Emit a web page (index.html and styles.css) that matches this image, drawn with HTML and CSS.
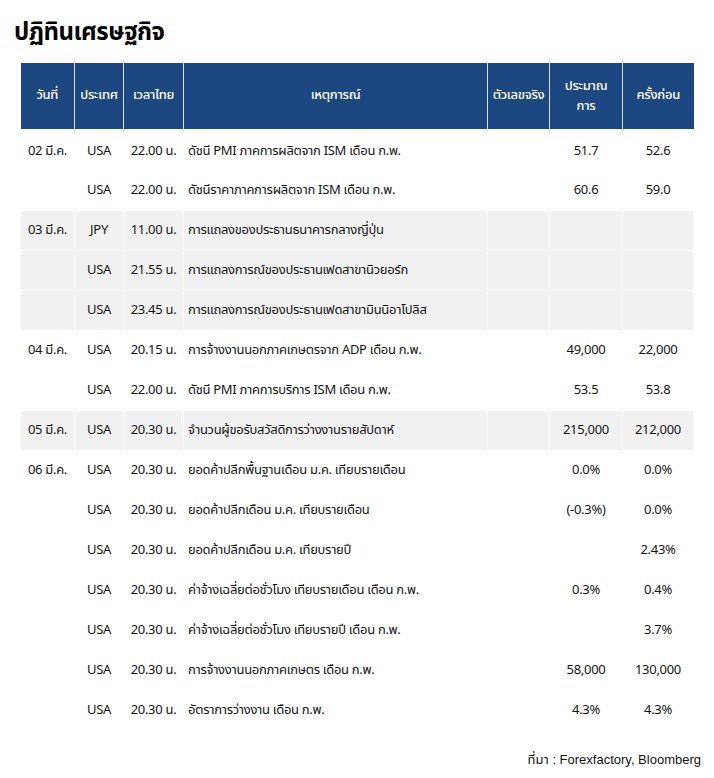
FILE: index.html
```html
<!DOCTYPE html>
<html lang="th">
<head>
<meta charset="utf-8">
<title>ปฏิทินเศรษฐกิจ</title>
<link rel="stylesheet" href="styles.css">
</head>
<body>
<div class="page">
  <h1 class="title">ปฏิทินเศรษฐกิจ</h1>
  <table class="cal">
    <colgroup>
      <col class="c-date"><col class="c-country"><col class="c-time"><col class="c-event"><col class="c-actual"><col class="c-fc"><col class="c-prev">
    </colgroup>
    <thead>
      <tr>
        <th>วันที่</th><th>ประเทศ</th><th>เวลาไทย</th><th>เหตุการณ์</th><th>ตัวเลขจริง</th><th><span class="hl">ประมาณ</span><span class="hl">การ</span></th><th>ครั้งก่อน</th>
      </tr>
    </thead>
    <tbody>
      <tr><td>02 มี.ค.</td><td>USA</td><td>22.00 น.</td><td class="ev">ดัชนี PMI ภาคการผลิตจาก ISM เดือน ก.พ.</td><td></td><td>51.7</td><td>52.6</td></tr>
      <tr><td></td><td>USA</td><td>22.00 น.</td><td class="ev">ดัชนีราคาภาคการผลิตจาก ISM เดือน ก.พ.</td><td></td><td>60.6</td><td>59.0</td></tr>
      <tr class="alt"><td>03 มี.ค.</td><td>JPY</td><td>11.00 น.</td><td class="ev">การแถลงของประธานธนาคารกลางญี่ปุ่น</td><td></td><td></td><td></td></tr>
      <tr class="alt"><td></td><td>USA</td><td>21.55 น.</td><td class="ev">การแถลงการณ์ของประธานเฟดสาขานิวยอร์ก</td><td></td><td></td><td></td></tr>
      <tr class="alt"><td></td><td>USA</td><td>23.45 น.</td><td class="ev">การแถลงการณ์ของประธานเฟดสาขามินนิอาโปลิส</td><td></td><td></td><td></td></tr>
      <tr><td>04 มี.ค.</td><td>USA</td><td>20.15 น.</td><td class="ev">การจ้างงานนอกภาคเกษตรจาก ADP เดือน ก.พ.</td><td></td><td>49,000</td><td>22,000</td></tr>
      <tr><td></td><td>USA</td><td>22.00 น.</td><td class="ev">ดัชนี PMI ภาคการบริการ ISM เดือน ก.พ.</td><td></td><td>53.5</td><td>53.8</td></tr>
      <tr class="alt"><td>05 มี.ค.</td><td>USA</td><td>20.30 น.</td><td class="ev">จำนวนผู้ขอรับสวัสดิการว่างงานรายสัปดาห์</td><td></td><td>215,000</td><td>212,000</td></tr>
      <tr><td>06 มี.ค.</td><td>USA</td><td>20.30 น.</td><td class="ev">ยอดค้าปลีกพื้นฐานเดือน ม.ค. เทียบรายเดือน</td><td></td><td>0.0%</td><td>0.0%</td></tr>
      <tr><td></td><td>USA</td><td>20.30 น.</td><td class="ev">ยอดค้าปลีกเดือน ม.ค. เทียบรายเดือน</td><td></td><td>(-0.3%)</td><td>0.0%</td></tr>
      <tr><td></td><td>USA</td><td>20.30 น.</td><td class="ev">ยอดค้าปลีกเดือน ม.ค. เทียบรายปี</td><td></td><td></td><td>2.43%</td></tr>
      <tr><td></td><td>USA</td><td>20.30 น.</td><td class="ev">ค่าจ้างเฉลี่ยต่อชั่วโมง เทียบรายเดือน เดือน ก.พ.</td><td></td><td>0.3%</td><td>0.4%</td></tr>
      <tr><td></td><td>USA</td><td>20.30 น.</td><td class="ev">ค่าจ้างเฉลี่ยต่อชั่วโมง เทียบรายปี เดือน ก.พ.</td><td></td><td></td><td>3.7%</td></tr>
      <tr><td></td><td>USA</td><td>20.30 น.</td><td class="ev">การจ้างงานนอกภาคเกษตร เดือน ก.พ.</td><td></td><td>58,000</td><td>130,000</td></tr>
      <tr><td></td><td>USA</td><td>20.30 น.</td><td class="ev">อัตราการว่างงาน เดือน ก.พ.</td><td></td><td>4.3%</td><td>4.3%</td></tr>
    </tbody>
  </table>
  <p class="source">ที่มา : Forexfactory, Bloomberg</p>
</div>
</body>
</html>
```

FILE: styles.css
```css
* { box-sizing: border-box; }
html, body {
  margin: 0;
  padding: 0;
  background: #ffffff;
}
body {
  font-family: "Noto Sans Thai", "Noto Sans", "Liberation Sans", sans-serif;
  color: #151515;
}
.page {
  width: 714px;
  padding: 16px 13px 0 14px;
}
.title {
  margin: 0 0 13px 0;
  font-size: 24px;
  line-height: 34px;
  font-weight: 700;
  color: #000;
  letter-spacing: -0.5px;
}
.cal {
  margin-left: 6px;
  width: 673px;
  border-collapse: collapse;
  table-layout: fixed;
  font-size: 13px;
  letter-spacing: -0.3px;
}
.c-date { width: 54px; }
.c-country { width: 49px; }
.c-time { width: 60px; }
.c-event { width: 304px; }
.c-actual { width: 62px; }
.c-fc { width: 73px; }
.c-prev { width: 71px; }
.cal th {
  background: #1c4780;
  color: #ffffff;
  font-weight: 500;
  height: 67px;
  padding: 0 2px;
  border: 1px solid #d9dee6;
  border-top: 0;
  border-bottom: 3px solid #ffffff;
  text-align: center;
  vertical-align: middle;
  line-height: 17px;
}
.cal th:first-child { border-left: 0; }
.cal th:last-child { border-right: 0; }
.cal th .hl {
  display: block;
  line-height: 20px;
}
.cal td {
  height: 40px;
  padding: 0 2px;
  border: 1px solid #ffffff;
  text-align: center;
  vertical-align: middle;
  white-space: nowrap;
  line-height: 18px;
}
.cal td.ev {
  text-align: left;
  padding-left: 4px;
}
.cal tr.alt td { background: #f1f1f1; }
.source {
  margin: 19px 0 0 0;
  text-align: right;
  font-size: 13px;
  color: #151515;
  font-family: "Liberation Sans", "Noto Sans Thai", sans-serif;
}
```
